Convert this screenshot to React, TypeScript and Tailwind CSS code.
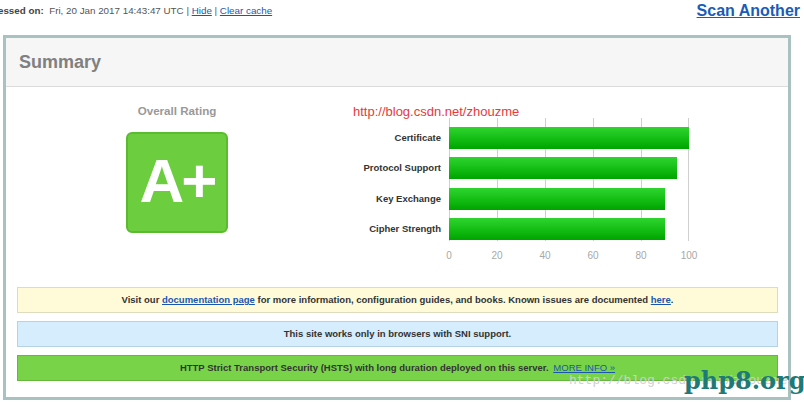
import React from 'react';

const bars = [
  { label: 'Certificate', value: 100 },
  { label: 'Protocol Support', value: 95 },
  { label: 'Key Exchange', value: 90 },
  { label: 'Cipher Strength', value: 90 },
];

const ticks = [0, 20, 40, 60, 80, 100];

const PLOT_W = 240;

function Chart() {
  return (
    <div className="flex items-start">
      {/* labels */}
      <div className="flex flex-col gap-[8.4px] pt-[9px] w-[100px] items-end">
        {bars.map((b) => (
          <div key={b.label} className="h-[22px] flex items-center text-[9.5px] font-bold text-[#333]">
            {b.label}
          </div>
        ))}
      </div>

      <div className="ml-[8px] flex flex-col">
        {/* plot */}
        <div className="relative w-[240px] flex flex-col gap-[8.4px] pt-[9px] pb-[1px]">
          {ticks.map((t) => (
            <div
              key={t}
              className="absolute top-0 bottom-0 w-px bg-[#cfcfcf]"
              style={{ left: (t / 100) * PLOT_W - (t === 100 ? 1 : 0) }}
            />
          ))}
          {bars.map((b) => (
            <div
              key={b.label}
              className="relative h-[22px] bg-gradient-to-b from-[#2fd42f] via-[#14bf14] to-[#00a400]"
              style={{ width: (b.value / 100) * PLOT_W }}
            />
          ))}
        </div>
        {/* axis */}
        <div className="relative h-[20px] w-[240px]">
          {ticks.map((t) => (
            <span
              key={t}
              className="absolute top-[8px] -translate-x-1/2 text-[10px] leading-[14px] text-[#a8a8a8]"
              style={{ left: (t / 100) * PLOT_W }}
            >
              {t}
            </span>
          ))}
        </div>
      </div>
    </div>
  );
}

export default function App() {
  return (
    <div className="relative w-[804px] h-[406px] overflow-hidden bg-white font-['Liberation_Sans',Arial,sans-serif]">
      {/* top line */}
      <div className="h-[35px] flex justify-between items-start">
        <div className="ml-[-20px] mt-[5px] text-[9.8px] leading-[12px] text-[#555] whitespace-nowrap">
          <span className="font-bold text-[#444]">Assessed on:</span>&nbsp; Fri, 20 Jan 2017 14:43:47 UTC |{' '}
          <a className="text-[#1a56b0] underline">Hide</a> |{' '}
          <a className="text-[#1a56b0] underline">Clear cache</a>
        </div>
        <a className="mr-[4px] mt-[2px] text-[16px] leading-[18px] font-bold text-[#1a5cb8] underline">Scan Another</a>
      </div>

      {/* summary box */}
      <div className="ml-[3px] w-[788px] border-[3px] border-[#a9c1c0]">
        <div className="h-[49px] bg-[#f6f6f6] border-b border-[#dcdcdc] flex items-center pl-[13px]">
          <h2 className="text-[18px] font-bold text-[#808080]">Summary</h2>
        </div>

        <div className="h-[200px] flex items-start">
          <div className="ml-[100px] w-[142px] flex flex-col items-center pt-[17px]">
            <div className="text-[11.6px] leading-[14px] font-bold text-[#999]">Overall Rating</div>
            <div className="mt-[14px] w-[102px] h-[101px] rounded-[6px] bg-[#6ccd3e] border-2 border-[#5bbb2e] flex items-center justify-center">
              <span className="text-[62px] leading-none font-bold text-white tracking-[-3px] mt-[-4px]">A+</span>
            </div>
          </div>

          <div className="ml-[93px] pt-[31px]">
            <Chart />
          </div>
        </div>

        <div className="flex flex-col gap-[8px] pl-[11px] pr-[10px] pb-[16px] text-[9.5px] font-bold text-[#333]">
          <div className="h-[26px] flex items-center justify-center bg-[#fffbd9] border border-[#dedbbf]">
            <span>
              Visit our <a className="text-[#1a56b0] underline">documentation page</a> for more information,
              configuration guides, and books. Known issues are documented{' '}
              <a className="text-[#1a56b0] underline">here</a>.
            </span>
          </div>
          <div className="h-[26px] flex items-center justify-center bg-[#d5edfc] border border-[#b6d3e3]">
            This site works only in browsers with SNI support.
          </div>
          <div className="h-[26px] flex items-center justify-center bg-[#78d348] border border-[#66b83c]">
            <span>
              HTTP Strict Transport Security (HSTS) with long duration deployed on this server.{' '}
              <a className="ml-[2px] font-normal text-[#1a56b0] underline">MORE INFO »</a>
            </span>
          </div>
        </div>
      </div>

      {/* watermarks */}
      <span className="absolute left-[353px] top-[104px] text-[13px] leading-[15px] text-[#e8393c] whitespace-nowrap">
        http://blog.csdn.net/zhouzme
      </span>
      <span className="absolute left-[569px] top-[373px] font-['Liberation_Mono',monospace] text-[13px] leading-[15px] text-[#cfcfcf] whitespace-nowrap">
        http://blog.csdn.net/zhouzme
      </span>
      <span className="absolute left-[684px] top-[366px] font-['DejaVu_Serif',serif] text-[24px] leading-[30px] font-bold text-[#1d7a78] whitespace-nowrap">
        php8.org
      </span>
    </div>
  );
}
